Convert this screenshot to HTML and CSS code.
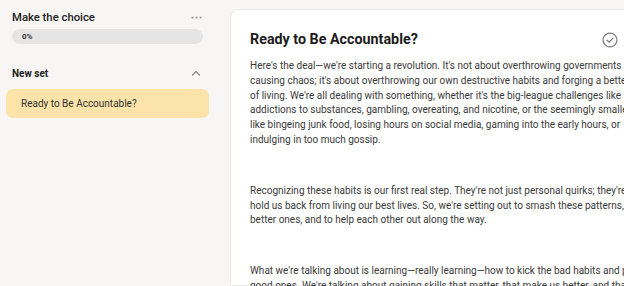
FILE: index.html
```html
<!DOCTYPE html>
<html lang="en">
<head>
<meta charset="utf-8">
<title>Make the choice</title>
<link rel="stylesheet" href="styles.css">
</head>
<body>
<div class="app">
  <aside class="sidebar">
    <div class="side-head">
      <span class="side-title">Make the choice</span>
      <svg class="dots" width="11" height="3" viewBox="0 0 11 3"><circle cx="1.5" cy="1.5" r="1.1"/><circle cx="5.5" cy="1.5" r="1.1"/><circle cx="9.5" cy="1.5" r="1.1"/></svg>
    </div>
    <div class="progress"><span class="progress-label">0%</span></div>
    <div class="set-head">
      <span class="set-title">New set</span>
      <svg class="chev" width="10" height="6" viewBox="0 0 10 6"><path d="M1.5 5 L5 1.5 L8.5 5" fill="none" stroke="#8a8a8a" stroke-width="1.3" stroke-linecap="round" stroke-linejoin="round"/></svg>
    </div>
    <div class="item active">Ready to Be Accountable?</div>
  </aside>
  <main class="main">
    <section class="card">
      <div class="card-head">
        <h1 class="card-title">Ready to Be Accountable?</h1>
        <svg class="check" width="16" height="16" viewBox="0 0 17 17"><circle cx="8.5" cy="8.5" r="7.4" fill="none" stroke="#7a7a7a" stroke-width="1.3"/><path d="M5.4 8.7 L7.6 10.8 L11.7 6.5" fill="none" stroke="#7a7a7a" stroke-width="1.3" stroke-linecap="round" stroke-linejoin="round"/></svg>
      </div>
      <div class="content">
        <p>Here's the deal—we're starting a revolution. It's not about overthrowing governments or causing chaos; it's about overthrowing our own destructive habits and forging a better way of living. We're all dealing with something, whether it's the big-league challenges like addictions to substances, gambling, overeating, and nicotine, or the seemingly smaller ones like bingeing junk food, losing hours on social media, gaming into the early hours, or indulging in too much gossip.</p>
        <p>Recognizing these habits is our first real step. They're not just personal quirks; they're what hold us back from living our best lives. So, we're setting out to smash these patterns, to find better ones, and to help each other out along the way.</p>
        <p>What we're talking about is learning—really learning—how to kick the bad habits and pick up good ones. We're talking about gaining skills that matter, that make us better, and that last.</p>
      </div>
    </section>
  </main>
</div>
</body>
</html>
```
FILE: styles.css
```css
* { box-sizing: border-box; }
html, body {
  margin: 0;
  padding: 0;
  height: 100%;
  overflow: hidden;
  background: #f7f6f4;
  font-family: Roboto, "Liberation Sans", Arial, sans-serif;
  color: #333;
}
.app {
  display: flex;
  height: 100%;
}
.sidebar {
  width: 218px;
  flex: none;
  padding: 9px 9px 0 6px;
  display: flex;
  flex-direction: column;
}
.side-head {
  display: flex;
  align-items: center;
  justify-content: space-between;
  padding: 0 7px 0 6px;
  height: 16px;
}
.side-title {
  font-size: 11.3px;
  font-weight: 500;
  color: #222;
}
.dots { fill: #9a9a9a; }
.progress {
  margin: 4px 6px 0 6px;
  height: 15px;
  border-radius: 8px;
  background: #e5e5e5;
  display: flex;
  align-items: center;
  padding-left: 10px;
}
.progress-label {
  font-size: 8px;
  font-weight: 700;
  color: #333;
}
.set-head {
  margin-top: 21px;
  display: flex;
  align-items: center;
  justify-content: space-between;
  padding: 0 8px 0 6px;
  height: 16px;
}
.set-title {
  font-size: 10px;
  font-weight: 700;
  color: #222;
}
.item {
  margin-top: 8px;
  height: 29px;
  border-radius: 7px;
  display: flex;
  align-items: center;
  padding-left: 15px;
  font-size: 10px;
  color: #333;
}
.item.active { background: #fbe3a9; }
.main {
  flex: 1;
  padding: 9px 0 0 12px;
  min-width: 0;
}
.card {
  background: #fff;
  border: 1px solid #ecebea;
  border-right: none;
  border-radius: 8px 0 0 0;
  height: 100%;
  width: 460px;
  padding: 19px 0 0 19px;
}
.card-head {
  display: flex;
  align-items: center;
  justify-content: space-between;
  width: 368px;
  height: 20px;
}
.card-title {
  margin: 0;
  font-size: 14.3px;
  font-weight: 700;
  color: #1c1c1c;
}
.check { margin-top: 1px; }
.content {
  width: 411px;
  margin-top: 10px;
  font-size: 10px;
  line-height: 14.8px;
  color: #3a3a3a;
}
.content p {
  margin: 0 0 36px 0;
}
```
